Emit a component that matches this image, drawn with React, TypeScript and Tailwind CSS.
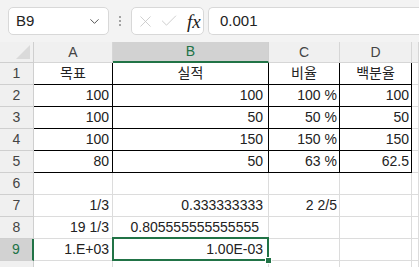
import { ChevronDown, X, Check } from 'lucide-react'

const FONT = { fontFamily: '"Liberation Sans", "Noto Sans CJK KR", sans-serif' }

type Cell = { text: string; align?: 'left' | 'center' | 'right'; pr?: string }

const COLS = ['A', 'B', 'C', 'D', '']
const PAD = ['pr-[3px]', 'pr-[5px]', 'pr-[2px]', 'pr-[2px]', 'pr-[2px]']

const rows: Cell[][] = [
  [{ text: '목표', align: 'center' }, { text: '실적', align: 'center' }, { text: '비율', align: 'center' }, { text: '백분율', align: 'center' }],
  [{ text: '100' }, { text: '100' }, { text: '100 %' }, { text: '100' }],
  [{ text: '100' }, { text: '50' }, { text: '50 %' }, { text: '50' }],
  [{ text: '100' }, { text: '150' }, { text: '150 %' }, { text: '150' }],
  [{ text: '80' }, { text: '50' }, { text: '63 %' }, { text: '62.5' }],
  [],
  [{ text: '1/3' }, { text: '0.333333333' }, { text: '2 2/5' }],
  [{ text: '19 1/3' }, { text: '0.805555555555555', pr: 'pr-[9px]' }],
  [{ text: '1.E+03' }, { text: '1.00E-03' }],
]

export default function App() {
  return (
    <div className="w-[419px] h-[267px] overflow-hidden bg-white text-[#222]" style={FONT}>
      {/* 수식 입력줄 */}
      <div className="h-[42px] bg-[#f3f3f3] flex items-center">
        <div className="ml-[8px] w-[101px] h-[28px] bg-white border border-[#d8d8d8] rounded-[5px] flex items-center justify-between pl-[7px] pr-[6px]">
          <span className="text-[15px] text-[#222]">B9</span>
          <ChevronDown size={15} strokeWidth={1.6} className="text-[#555]" />
        </div>
        <div className="w-[22px] flex flex-col items-center gap-[2px]">
          <span className="w-[2px] h-[2px] rounded-full bg-[#888]" />
          <span className="w-[2px] h-[2px] rounded-full bg-[#888]" />
          <span className="w-[2px] h-[2px] rounded-full bg-[#888]" />
        </div>
        <div className="w-[73px] h-[28px] bg-white border border-[#d8d8d8] rounded-[5px] flex items-center pl-[4px] gap-[4px]">
          <X size={19} strokeWidth={1} className="text-[#c4c4c4]" />
          <Check size={20} strokeWidth={1} className="text-[#c4c4c4]" />
          <span className="ml-[4px] text-[19px] italic text-[#222] leading-none" style={{ fontFamily: '"Liberation Serif", serif' }}>fx</span>
        </div>
        <div className="ml-[4px] flex-1 h-[28px] bg-white border border-[#d8d8d8] border-r-0 rounded-l-[5px] flex items-center pl-[11px]">
          <span className="text-[15px] text-[#222]">0.001</span>
        </div>
      </div>

      {/* 시트 */}
      <div className="grid grid-cols-[34px_79px_156px_71px_72px_1fr]">
        {/* 열 머리글 */}
        <div className="h-[21px] bg-[#f0f0f0] border-r border-b border-[#cfcfcf] relative">
          <div
            className="absolute right-[3px] bottom-[3px] w-[14px] h-[14px] bg-[#dadada]"
            style={{ clipPath: 'polygon(100% 0, 100% 100%, 0 100%)' }}
          />
        </div>
        {COLS.map((c, i) =>
          c === 'B' ? (
            <div key={i} className="h-[21px] bg-[#d2d2d2] border-r border-[#cfcfcf] border-b-2 border-b-[#217346] flex items-center justify-center text-[14px] text-[#217346]">
              {c}
            </div>
          ) : (
            <div key={i} className="h-[21px] bg-[#f0f0f0] border-r border-b border-[#d6d6d6] flex items-center justify-center text-[14px] text-[#444]">
              {c}
            </div>
          ),
        )}

        {rows.map((row, r) => {
          const n = r + 1
          const sel = n === 9
          return [
            <div
              key={`h${n}`}
              className={
                sel
                  ? 'h-[22px] bg-[#d2d2d2] border-r-2 border-r-[#217346] border-b border-b-[#cfcfcf] flex items-center justify-center text-[14px] text-[#217346]'
                  : 'h-[22px] bg-[#f0f0f0] border-r border-b border-[#cfcfcf] flex items-center justify-center text-[14px] text-[#444]'
              }
            >
              {n}
            </div>,
            ...COLS.map((_, c) => {
              const cell = row[c]
              const boxed = n <= 5 && c < 4
              const align = cell?.align ?? 'right'
              const isSel = sel && c === 1
              return (
                <div
                  key={`${n}-${c}`}
                  className={[
                    'h-[22px] border-r border-b flex items-center text-[14px] whitespace-nowrap relative',
                    boxed ? 'border-black' : 'border-[#dcdcdc]',
                    align === 'center' ? 'justify-center' : 'justify-end',
                    align === 'center' ? '' : cell?.pr ?? PAD[c],
                    isSel ? 'z-10' : '',
                  ].join(' ')}
                >
                  {cell?.text}
                  {isSel && (
                    <>
                      <div className="absolute left-[-1px] top-[-2px] right-[-1px] bottom-[-1px] border-2 border-[#217346] pointer-events-none" />
                      <div className="absolute right-[-4px] bottom-[-4px] w-[7px] h-[7px] bg-[#217346] border border-white" />
                    </>
                  )}
                </div>
              )
            }),
          ]
        })}
        {/* 잘린 10행 */}
        <div className="h-[22px] bg-[#f0f0f0] border-r border-[#cfcfcf]" />
        {COLS.map((_, c) => (
          <div key={`10-${c}`} className="h-[22px] border-r border-[#dcdcdc]" />
        ))}
      </div>
    </div>
  )
}
